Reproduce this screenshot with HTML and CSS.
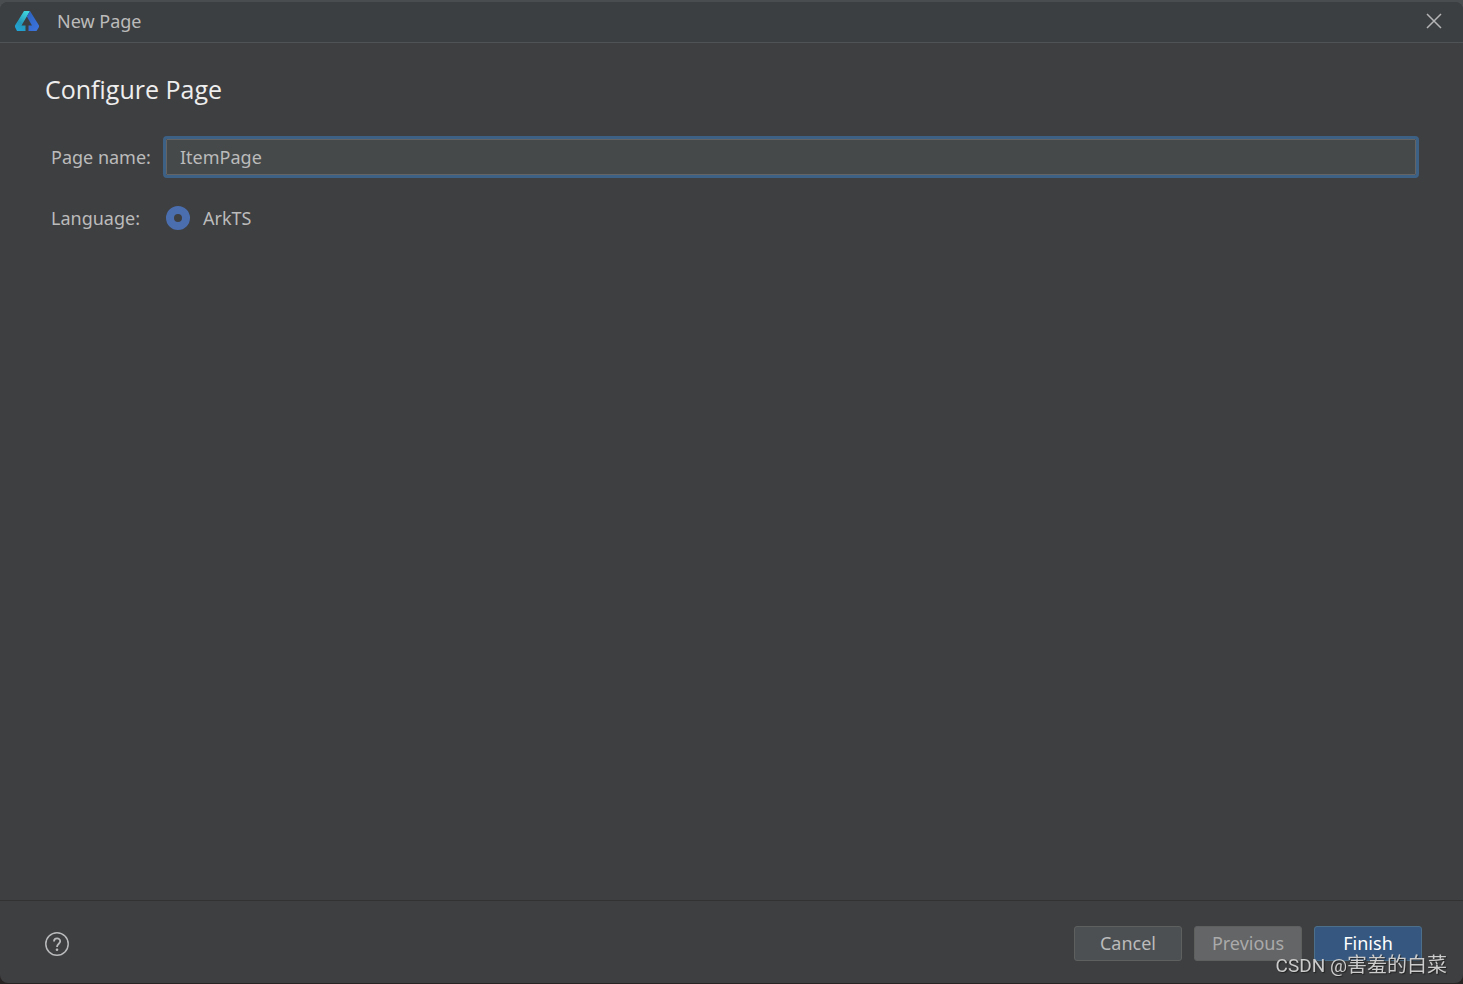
FILE: index.html
```html
<!DOCTYPE html>
<html lang="en">
<head>
<meta charset="UTF-8" />
<meta name="viewport" content="width=device-width, initial-scale=1" />
<title>New Page</title>
<link rel="stylesheet" href="styles.css">
</head>
<body>

<form class="dialog">
  <header class="titlebar">
    <svg class="logo" width="24" height="20" viewBox="0 0 24 20" aria-hidden="true">
      <defs>
        <linearGradient id="teal" x1="0.7" y1="0" x2="0.2" y2="1">
          <stop offset="0" stop-color="#3fd5de" />
          <stop offset="0.6" stop-color="#2598ba" />
          <stop offset="1" stop-color="#20a4d8" />
        </linearGradient>
        <linearGradient id="blue" x1="0" y1="0" x2="0.6" y2="1">
          <stop offset="0" stop-color="#2b62bd" />
          <stop offset="1" stop-color="#3a72da" />
        </linearGradient>
      </defs>
      <path fill="url(#teal)" d="M9 0H15L6.500 14.500H10.500V20H2L0 16V14.500Z" />
      <path fill="url(#blue)" d="M15 0L24 14.500V16L21.500 20H13.500V14.500H17L11.800 5.500Z" />
    </svg>
    <span class="title">New Page</span>
    <button type="button" class="close" aria-label="Close">
      <svg width="16" height="16" viewBox="0 0 16 16"><path d="M1 1L15 15M15 1L1 15" stroke="#b4b5b6" stroke-width="1.500" /></svg>
    </button>
  </header>

  <main class="content">
    <h1>Configure Page</h1>
    <div class="row">
      <label class="caption" for="page-name">Page name:</label>
      <input class="field" type="text" id="page-name" value="ItemPage" />
    </div>
    <div class="row" role="radiogroup" aria-labelledby="language">
      <span class="caption" id="language">Language:</span>
      <input class="radio" type="radio" id="arkts" name="language" checked />
      <label for="arkts">ArkTS</label>
    </div>
  </main>

  <footer class="footer">
    <button type="button" class="help" aria-label="Help">
      <svg width="24" height="24" viewBox="0 0 24 24" fill="none" stroke="#b9babb" stroke-width="1.500">
        <circle cx="12" cy="12" r="11.200" />
        <path d="M9 9.500C9 5.500 15.200 5.500 15.200 9.300C15.200 11.800 12 11.800 12 15" stroke-width="1.800" />
        <circle cx="12" cy="17.800" r="1.300" fill="#b9babb" stroke="none" />
      </svg>
    </button>
    <div class="buttons">
      <button type="button" class="btn">Cancel</button>
      <button type="button" class="btn" disabled>Previous</button>
      <button type="submit" class="btn btn-primary">Finish</button>
    </div>
  </footer>
</form>

<div class="watermark"><span class="latin">CSDN @</span>害羞的白菜</div>

</body>
</html>
```

FILE: styles.css
```css
* {
  box-sizing: border-box;
  margin: 0;
  padding: 0;
}

body {
  min-height: 100vh;
  display: flex;
  padding: 2px 0 1px;
  background: linear-gradient(#4a4d50 50%, #292424 50%);
  color: #bbb;
  font-family: "Noto Sans", "Open Sans", sans-serif;
  font-size: 18px;
  line-height: 24px;
}

input, button {
  font: inherit;
  color: inherit;
}

.dialog {
  flex: 1;
  display: flex;
  flex-direction: column;
  background: #3e3f41;
  border-radius: 8px;
  overflow: hidden;
}

.titlebar {
  display: flex;
  align-items: center;
  height: 41px;
  padding: 0 20px 2px 15px;
  background: #3c3f41;
  border-bottom: 1px solid #505355;
}

.title {
  flex: 1;
  margin-left: 18px;
}

.close, .help {
  display: flex;
  background: none;
  border: none;
}

.close {
  padding: 1px;
}

.content {
  flex: 1;
  padding: 28px 47px 28px 45px;
}

h1 {
  margin-bottom: 32px;
  color: #eee;
  font-family: "Open Sans", sans-serif;
  font-size: 25px;
  font-weight: 400;
  line-height: 36px;
}

.row {
  display: flex;
  align-items: center;
  margin-bottom: 31px;
  padding-left: 6px;
}

.caption {
  width: 115px;
}

.field {
  flex: 1;
  height: 36px;
  padding: 0 13px;
  background: #45494a;
  border: 1px solid #646464;
  outline: 3px solid #3d6185;
  border-radius: 1px;
}

.radio {
  appearance: none;
  width: 24px;
  height: 24px;
  margin-right: 13px;
  border: 8px solid #4b6eaf;
  border-radius: 50%;
}

.footer {
  display: flex;
  align-items: center;
  justify-content: space-between;
  height: 83px;
  padding: 3px 41px 0 45px;
  border-top: 1px solid #323232;
}

.buttons {
  display: flex;
  gap: 12px;
}

.btn {
  width: 108px;
  height: 35px;
  padding-bottom: 2px;
  background: #4c5052;
  border: 1px solid #5e6060;
  border-radius: 3px;
}

.btn:disabled {
  background: #646566;
  color: #aaa;
}

.btn-primary {
  background: #365880;
  border-color: #4c708c;
  color: #fff;
}

.watermark {
  position: fixed;
  right: 16px;
  bottom: 6px;
  color: #ccc;
  font-family: "Noto Sans CJK SC", sans-serif;
  font-size: 20px;
  text-shadow: 1px 1px 1px #222;
  pointer-events: none;
}

.latin {
  font-family: Roboto, sans-serif;
  font-size: 19px;
}
```
